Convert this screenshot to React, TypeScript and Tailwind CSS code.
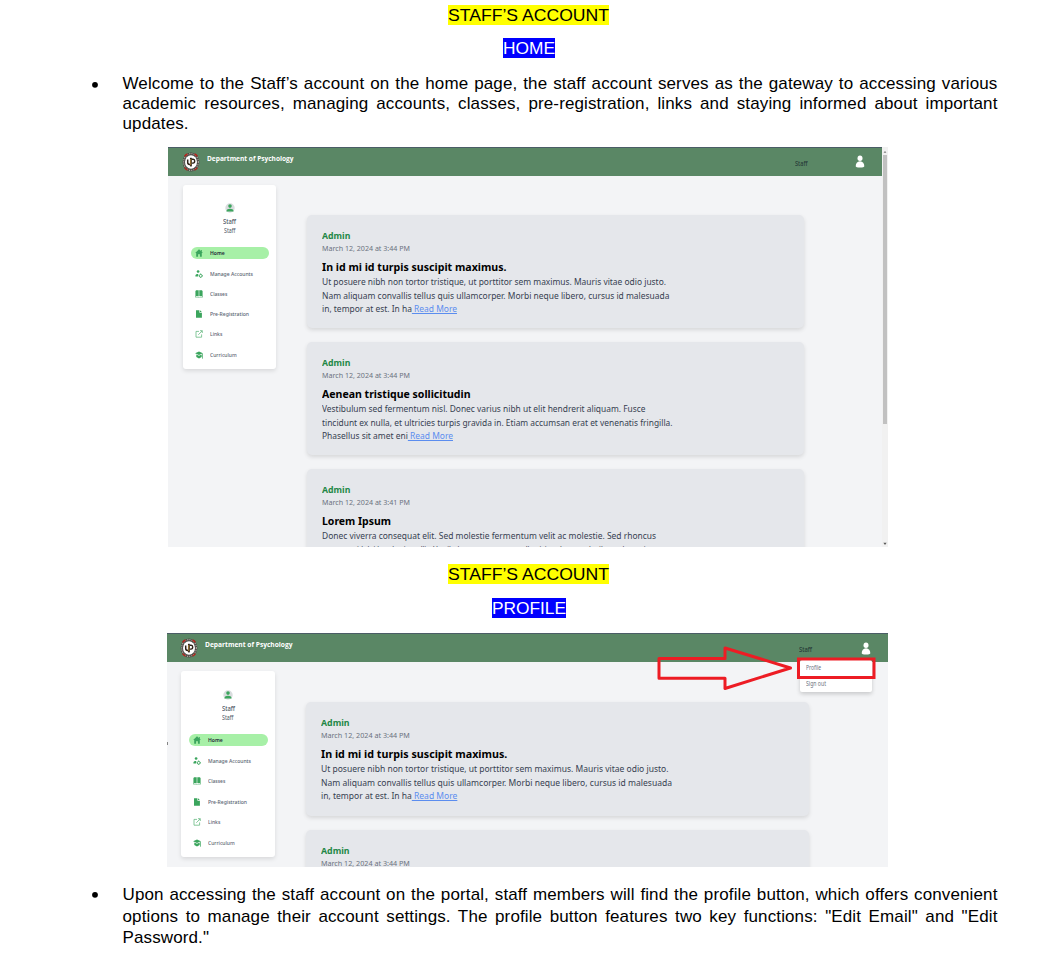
import { useLayoutEffect, useRef, useState } from "react";
import type { ReactNode } from "react";

/* One line of text condensed or widened to a given width. */
function Fit({ w, className = "", children }: { w: number; className?: string; children: ReactNode }) {
  const ref = useRef<HTMLSpanElement>(null);
  const [scale, setScale] = useState(1);
  useLayoutEffect(() => {
    const el = ref.current;
    if (!el) return;
    el.style.transform = "none";
    const natural = el.getBoundingClientRect().width;
    const next = natural ? w / natural : 1;
    el.style.transform = `scaleX(${next})`;
    setScale(next);
  }, [w]);
  return (
    <div className={`shrink-0 whitespace-nowrap ${className}`} style={{ width: w }}>
      <span ref={ref} className="inline-block origin-left align-top" style={{ transform: `scaleX(${scale})` }}>
        {children}
      </span>
    </div>
  );
}

function Seal() {
  return (
    <svg viewBox="0 0 18 20" className="h-[20px] w-[18px] shrink-0">
      <ellipse cx="9" cy="10" rx="8.4" ry="9.4" fill="#4a4a44" />
      <ellipse cx="9" cy="10" rx="7.4" ry="8.4" fill="none" stroke="#a9a49c" strokeWidth="1.2" strokeDasharray="1.2 1" />
      <path d="M2.6 4.4A8 8.8 0 0 1 5.4 2M12.6 2A8 8.8 0 0 1 15.4 4.4M2.6 15.6A8 8.8 0 0 0 5.4 18M12.6 18A8 8.8 0 0 0 15.4 15.6" stroke="#b3261e" strokeWidth="1.5" fill="none" />
      <ellipse cx="9" cy="10" rx="6" ry="6.7" fill="#fff" />
      <path d="M5.7 7.4v3.2c0 1.2.8 1.9 2 1.9h.8" stroke="#2b2117" strokeWidth="1.5" fill="none" />
      <path d="M9.8 7.2h1.4c1 0 1.5.7 1.5 1.9s-.6 2-1.6 2H10" stroke="#2b2117" strokeWidth="1.4" fill="none" />
      <path d="M8.9 5.8v8.6" stroke="#2b2117" strokeWidth="1.9" />
      <path d="M8.7 7v6.2" stroke="#b98a35" strokeWidth=".9" />
    </svg>
  );
}

function Person() {
  return (
    <svg viewBox="0 0 10 13" className="h-[13px] w-[10px] shrink-0" fill="#fff">
      <ellipse cx="5" cy="3.2" rx="2.5" ry="2.7" />
      <path d="M.7 11.2C.7 8.4 2.2 6.2 5 6.2s4.3 2.2 4.3 5c0 .8-1.6 1.3-4.3 1.3S.7 12 .7 11.2Z" />
    </svg>
  );
}

function Avatar() {
  return (
    <svg viewBox="0 0 10 10" className="h-[10px] w-[10px]">
      <circle cx="5" cy="5" r="4.7" fill="#d9dcde" />
      <circle cx="5" cy="3.1" r="1.8" fill="#3ba55d" />
      <path d="M1.4 8.6c0-2.1 1.7-2.8 3.6-2.8s3.6.7 3.6 2.8Z" fill="#3ba55d" />
    </svg>
  );
}

const icons: Record<string, ReactNode> = {
  Home: <path d="M4 .3.2 3.9h1V7.7h1.9V5.2h1.8v2.5h1.9V3.9h1L6.8 2.7V.9H5.9v1Z" />,
  "Manage Accounts": (
    <>
      <circle cx="3.1" cy="1.5" r="1.35" />
      <path d="M.4 6.6V5.7c0-1.1 1-1.7 2.5-1.7.4 0 .6.3.4.6L2.9 6.6Z" />
      <circle cx="5.7" cy="5.8" r="1.4" fill="none" stroke="#3ba55d" strokeWidth=".9" />
      <path d="M5.3 3.6h.8v.8h-.8ZM5.3 7.2h.8V8h-.8ZM3.5 5.4h.8v.8h-.8ZM7.1 5.4H8v.8h-.9Z" />
    </>
  ),
  Classes: (
    <>
      <path d="M.8.3H3.7V6H.8ZM4.3.3h2.9V6H4.3Z" />
      <path d="M.3 1v6.1h3.1l.6.6.6-.6h3.1V1" fill="none" stroke="#3ba55d" strokeWidth=".6" />
    </>
  ),
  "Pre-Registration": <path d="M1 .2h3.4v2.5h2.5v5.1H1ZM5 .3l1.8 1.8H5Z" />,
  Links: <path d="M4 1.4H1v5.8h5.6V4.4M3.3 4.8 7.2.8M5 .7h2.3V3" fill="none" stroke="#5fb57b" strokeWidth=".75" />,
  Curriculum: (
    <>
      <path d="M4 .5.1 2.3 4 4.1l3.9-1.8ZM1.3 3.5 4 4.8l2.7-1.3v2.6L4 7.4 1.3 6.1Z" />
      <path d="M7.5 2.5v5.2" stroke="#3ba55d" strokeWidth=".7" />
    </>
  ),
};

const nav: [string, number][] = [
  ["Home", 14.7],
  ["Manage Accounts", 43],
  ["Classes", 17.3],
  ["Pre-Registration", 39],
  ["Links", 12.3],
  ["Curriculum", 26.7],
];

function Sidebar({ wide }: { wide?: boolean }) {
  return (
    <aside
      className={`shrink-0 rounded-[3px] bg-white shadow-[0_2px_4px_rgba(0,0,0,0.11)] ${
        wide
          ? "ml-[14px] mt-[9.5px] h-[186px] w-[94px] px-[7.5px] pt-[18.5px]"
          : "ml-[15px] mt-[9.5px] h-[184px] w-[93px] px-[7.5px] pt-[18px]"
      }`}
    >
      <div className="flex flex-col items-center text-[#4b5563]">
        <Avatar />
        <Fit w={13} className="mt-[4px] h-[9px] text-[6.8px] leading-[9px] font-medium">Staff</Fit>
        <Fit w={11.5} className="h-[9px] text-[6.2px] leading-[9px]">Staff</Fit>
      </div>
      <nav className={`flex flex-col ${wide ? "mt-[12.6px] gap-[8.5px]" : "mt-[12.3px] gap-[8.3px]"}`}>
        {nav.map(([label, w], i) => (
          <div
            key={label}
            className={`flex h-[12px] items-center gap-[7px] rounded-full pl-[4.5px] ${i === 0 ? "bg-[#a7f0a7] text-[#1f2937]" : "text-[#5b6472]"}`}
          >
            <svg viewBox="0 0 8 8" className="h-[8px] w-[8px] shrink-0" fill="#3ba55d">
              {icons[label]}
            </svg>
            <Fit w={w} className={`text-[6.1px] leading-[12px] ${i === 0 ? "font-semibold" : "font-medium"}`}>
              {label}
            </Fit>
          </div>
        ))}
      </nav>
    </aside>
  );
}

type Row = { text: string; w: number; more?: boolean };
type PostData = { date: string; title: string; titleW: number; rows: Row[] };

const posts: PostData[] = [
  {
    date: "March 12, 2024 at 3:44 PM",
    title: "In id mi id turpis suscipit maximus.",
    titleW: 184.5,
    rows: [
      { text: "Ut posuere nibh non tortor tristique, ut porttitor sem maximus. Mauris vitae odio justo.", w: 344 },
      { text: "Nam aliquam convallis tellus quis ullamcorper. Morbi neque libero, cursus id malesuada", w: 347.5 },
      { text: "in, tempor at est. In ha", w: 135, more: true },
    ],
  },
  {
    date: "March 12, 2024 at 3:44 PM",
    title: "Aenean tristique sollicitudin",
    titleW: 148.5,
    rows: [
      { text: "Vestibulum sed fermentum nisl. Donec varius nibh ut elit hendrerit aliquam. Fusce", w: 323.5 },
      { text: "tincidunt ex nulla, et ultricies turpis gravida in. Etiam accumsan erat et venenatis fringilla.", w: 350.5 },
      { text: "Phasellus sit amet eni", w: 131, more: true },
    ],
  },
  {
    date: "March 12, 2024 at 3:41 PM",
    title: "Lorem Ipsum",
    titleW: 69,
    rows: [
      { text: "Donec viverra consequat elit. Sed molestie fermentum velit ac molestie. Sed rhoncus", w: 334 },
      { text: "accumsan id dui hendrerit mollis. Vestibulum cursus sem a nulla nisi, sed massa dapibus volutpat in", w: 328 },
    ],
  },
];

function Post({ post, wide, brief }: { post: PostData; wide?: boolean; brief?: boolean }) {
  const k = wide ? 1.01 : 1;
  return (
    <article
      className={`shrink-0 rounded-[5px] bg-[#e5e7eb] pt-[14px] shadow-[0_2px_4px_rgba(0,0,0,0.12)] ${
        wide ? "h-[114px] w-[503px] pl-[15px]" : "h-[113px] w-[497px] pl-[14.5px]"
      }`}
    >
      <Fit w={28.3 * k} className="h-[13.6px] text-[9.4px] leading-[13.6px] font-bold text-[#1f8746]">Admin</Fit>
      <Fit w={88 * k} className="h-[11.4px] text-[7.9px] leading-[11.4px] text-[#6b7280]">{post.date}</Fit>
      {!brief && (
        <>
          <Fit w={post.titleW * k} className="mt-[5px] h-[16px] text-[11.4px] leading-[16px] font-bold text-black">
            {post.title}
          </Fit>
          {post.rows.map((r) => (
            <Fit key={r.text} w={r.w * k} className="h-[13.6px] text-[9.4px] leading-[13.6px] text-[#374151]">
              {r.text}
              {r.more && <span className="whitespace-pre text-[#5b8def] underline"> Read More</span>}
            </Fit>
          ))}
        </>
      )}
    </article>
  );
}

function HomeShot() {
  return (
    <section className="ml-[168px] mt-[13px] flex h-[400px] w-[720px] shrink-0 overflow-hidden bg-[#f3f4f6] font-['Noto_Sans',sans-serif]">
      <div className="flex w-[714px] shrink-0 flex-col">
        <header className="flex h-[28.5px] shrink-0 items-start border-t border-[#4b5d66] bg-[#5a8765] pl-[14px]">
          <div className="mt-[3.7px]"><Seal /></div>
          <Fit w={86.5} className="ml-[7px] mt-[4px] font-['Open_Sans',sans-serif] text-[7.5px] leading-[12px] font-bold text-white">
            Department of Psychology
          </Fit>
          <Fit w={12.5} className="ml-[501px] mt-[10px] text-[6.4px] leading-[12px] font-medium text-[#263a38]">Staff</Fit>
          <div className="ml-[48px] mt-[7px]"><Person /></div>
        </header>
        <div className="flex items-start">
          <Sidebar />
          <div className="ml-[31px] mt-[39.5px] flex flex-col gap-[14px]">
            {posts.map((p) => <Post key={p.title} post={p} />)}
          </div>
        </div>
      </div>
      <div className="flex w-[6px] shrink-0 flex-col items-center bg-[#f1f1f1]">
        <svg viewBox="0 0 6 8" className="h-[8px] w-[6px] shrink-0"><path d="M1.6 5.8 3 4l1.4 1.8Z" fill="#777" /></svg>
        <div className="h-[268.5px] w-[4.6px] shrink-0 bg-[#c1c1c1]" />
        <svg viewBox="0 0 6 8" className="mt-auto h-[8px] w-[6px] shrink-0"><path d="M1.4 3.8h3.2L3 6Z" fill="#555" /></svg>
      </div>
    </section>
  );
}

function ProfileShot() {
  return (
    <section className="relative ml-[167px] mt-[15px] h-[234px] w-[721px] shrink-0 overflow-hidden bg-[#f3f4f6] font-['Noto_Sans',sans-serif]">
      <header className="flex h-[28.5px] items-start border-t border-[#4b5d66] bg-[#5a8765] pl-[13.3px]">
        <div className="mt-[4px]"><Seal /></div>
        <Fit w={87.5} className="ml-[6.7px] mt-[4px] font-['Open_Sans',sans-serif] text-[7.5px] leading-[12px] font-bold text-white">
          Department of Psychology
        </Fit>
        <Fit w={13} className="ml-[506.5px] mt-[10px] text-[6.4px] leading-[12px] font-medium text-[#263a38]">Staff</Fit>
        <div className="ml-[49px] mt-[7.5px]"><Person /></div>
      </header>
      <div className="flex items-start">
        <Sidebar wide />
        <div className="ml-[31px] mt-[40.5px] flex flex-col gap-[14px]">
          <Post post={posts[0]} wide />
          <Post post={posts[1]} wide brief />
        </div>
      </div>
      <div className="absolute left-[633px] top-[27px] flex h-[32px] w-[72px] flex-col rounded-[2px] bg-white pl-[5.5px] pt-[2px] text-[6.3px] leading-[12px] text-[#6b7280] shadow-[0_2px_4px_rgba(0,0,0,0.18)]">
        <Fit w={15} className="h-[15.5px]">Profile</Fit>
        <Fit w={20} className="h-[12px]">Sign out</Fit>
      </div>
      <svg viewBox="0 0 721 234" className="absolute left-0 top-0 h-[234px] w-[721px]" fill="none" stroke="#ed1c24" strokeWidth="3" strokeLinejoin="round">
        <path d="M492 25.5h66V15l65.5 20L558 55.5V45.3h-66Z" />
        <path d="M631.5 26h75.5v18.4h-75.5Z" strokeLinejoin="miter" />
        <path d="M0 109v3" stroke="#555" strokeWidth="1.4" />
      </svg>
    </section>
  );
}

function Heading({ w, className, children }: { w: number; className: string; children: ReactNode }) {
  return (
    <div className="flex justify-center pl-[3px]">
      <Fit w={w} className={`h-[20px] pt-px leading-[20px] ${className}`}>{children}</Fit>
    </div>
  );
}

function Bullet({ lines, className }: { lines: string[]; className: string }) {
  return (
    <div className={`flex pl-[92px] ${className}`}>
      <div className="w-[30.5px] shrink-0">
        <svg viewBox="0 0 6 20" className="h-[20px] w-[6px]"><circle cx="3" cy="10.8" r="2.9" fill="#000" /></svg>
      </div>
      <div className="w-[875px] tracking-[0.12px]">
        {lines.map((l, i) => (
          <div key={l} className={`whitespace-nowrap ${i < lines.length - 1 ? "text-justify [text-align-last:justify]" : ""}`}>{l}</div>
        ))}
      </div>
    </div>
  );
}

export default function App() {
  return (
    <main className="flex h-[953px] w-[1054px] flex-col overflow-hidden bg-white pt-[5px] font-['Liberation_Sans',Arial,sans-serif] text-[17px] text-black">
      <Heading w={161} className="bg-[#ffff00]">STAFF’S ACCOUNT</Heading>
      <div className="h-[13px]" />
      <Heading w={52} className="bg-[#0000ff] text-white">HOME</Heading>
      <Bullet
        className="mt-[16px] leading-[20px]"
        lines={[
          "Welcome to the Staff’s account on the home page, the staff account serves as the gateway to accessing various",
          "academic resources, managing accounts, classes, pre-registration, links and staying informed about important",
          "updates.",
        ]}
      />
      <HomeShot />
      <div className="h-[17px] shrink-0" />
      <Heading w={161} className="bg-[#ffff00]">STAFF’S ACCOUNT</Heading>
      <div className="h-[14px] shrink-0" />
      <Heading w={74} className="bg-[#0000ff] text-white">PROFILE</Heading>
      <ProfileShot />
      <Bullet
        className="mt-[17px] leading-[21.6px]"
        lines={[
          "Upon accessing the staff account on the portal, staff members will find the profile button, which offers convenient",
          "options to manage their account settings. The profile button features two key functions: \"Edit Email\" and \"Edit",
          "Password.\"",
        ]}
      />
    </main>
  );
}
